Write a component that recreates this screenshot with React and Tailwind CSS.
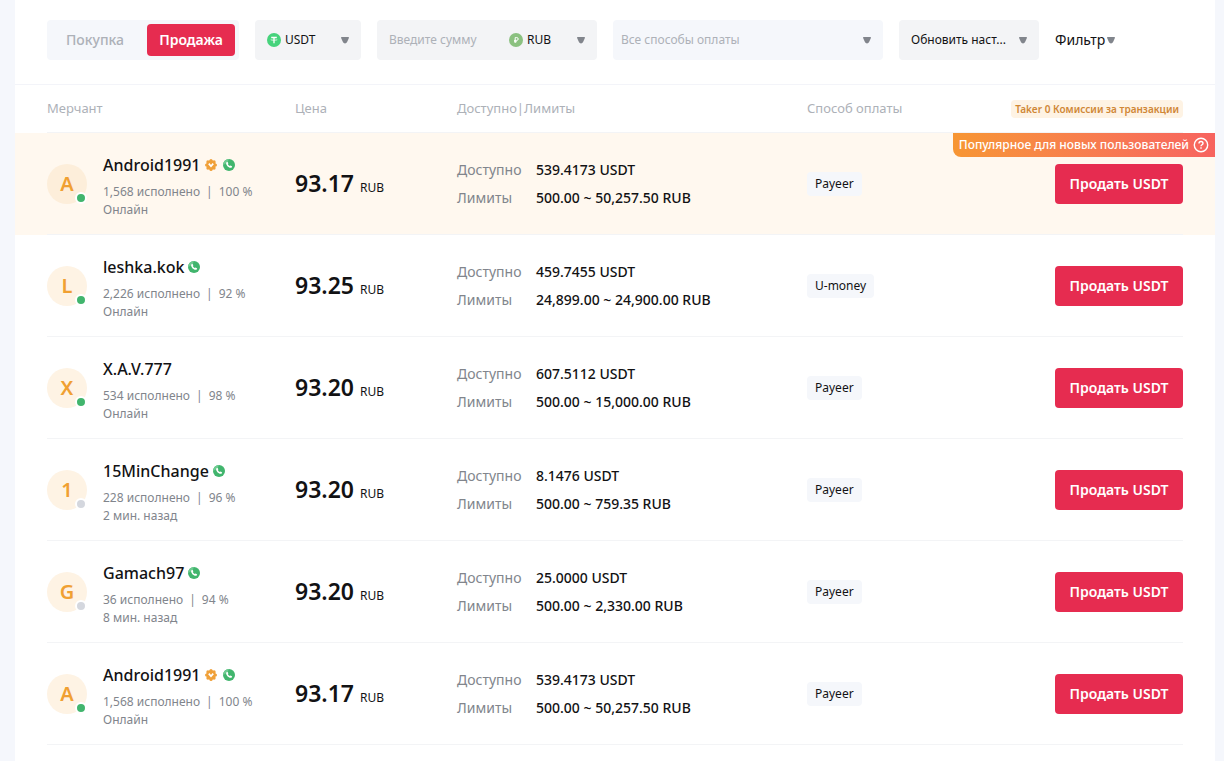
import React from "react";

const offers = [
  { id: 1, name: "Android1991", badge: true, phone: true, orders: "1,568", rate: "100", seen: "Онлайн", online: true, price: "93.17", available: "539.4173", limits: "500.00 ~ 50,257.50", payment: "Payeer", popular: true },
  { id: 2, name: "leshka.kok", phone: true, orders: "2,226", rate: "92", seen: "Онлайн", online: true, price: "93.25", available: "459.7455", limits: "24,899.00 ~ 24,900.00", payment: "U-money" },
  { id: 3, name: "X.A.V.777", orders: "534", rate: "98", seen: "Онлайн", online: true, price: "93.20", available: "607.5112", limits: "500.00 ~ 15,000.00", payment: "Payeer" },
  { id: 4, name: "15MinChange", phone: true, orders: "228", rate: "96", seen: "2 мин. назад", price: "93.20", available: "8.1476", limits: "500.00 ~ 759.35", payment: "Payeer" },
  { id: 5, name: "Gamach97", phone: true, orders: "36", rate: "94", seen: "8 мин. назад", price: "93.20", available: "25.0000", limits: "500.00 ~ 2,330.00", payment: "Payeer" },
  { id: 6, name: "Android1991", badge: true, phone: true, orders: "1,568", rate: "100", seen: "Онлайн", online: true, price: "93.17", available: "539.4173", limits: "500.00 ~ 50,257.50", payment: "Payeer" },
];

const Arrow = () => (
  <svg className="h-2 w-2 shrink-0 text-[#81858c] pointer-events-none" viewBox="0 0 8 8" fill="currentColor">
    <path d="M.8 1h6.400c.6 0 .8.500.7 1L6.200 5.700C5.600 7 4.900 7.400 4 7.400S2.400 7 1.800 5.700L.1 2C0 1.500.2 1 .8 1z" />
  </svg>
);

const UsdtIcon = () => (
  <svg className="h-3.5 w-3.5 shrink-0" viewBox="0 0 14 14">
    <circle cx="7" cy="7" r="7" fill="#46d37c" />
    <path d="M4.200 4.400h5.600M7 4.400v5.800" stroke="#fff" strokeWidth="1.3" />
    <ellipse cx="7" cy="6.700" rx="3.200" ry=".8" fill="none" stroke="#fff" strokeWidth=".5" />
  </svg>
);

const RubIcon = () => (
  <svg className="h-3.5 w-3.5 shrink-0" viewBox="0 0 14 14">
    <circle cx="7" cy="7" r="7" fill="#8bc180" />
    <path d="M6.200 10V4.600h1.600a1.400 1.400 0 010 2.800H5M5 8.700h2.800" fill="none" stroke="#fff" strokeWidth="1" />
  </svg>
);

const BadgeIcon = () => (
  <svg className="h-3 w-3 shrink-0" viewBox="0 0 12 12">
    <g fill="#f0a13a">
      <circle cx="6" cy="6" r="4.800" />
      <circle cx="6" cy="1.600" r="1.600" />
      <circle cx="9.100" cy="2.900" r="1.600" />
      <circle cx="10.400" cy="6" r="1.600" />
      <circle cx="9.100" cy="9.100" r="1.600" />
      <circle cx="6" cy="10.400" r="1.600" />
      <circle cx="2.900" cy="9.100" r="1.600" />
      <circle cx="1.600" cy="6" r="1.600" />
      <circle cx="2.900" cy="2.900" r="1.600" />
    </g>
    <path d="M3.800 4.600L6 7.200l2.200-2.600" fill="none" stroke="#fff" strokeWidth="1.700" />
  </svg>
);

const PhoneIcon = () => (
  <svg className="h-3 w-3 shrink-0" viewBox="0 0 12 12">
    <circle cx="6" cy="6" r="6" fill="#41b56d" />
    <path d="M0 6a6 6 0 016-6C5 3 3 5 0 6z" fill="#6fcb91" />
    <path
      d="M3.500 3.200l.9-.5 1 1.500-.6.8c.4.9 1.100 1.600 2 2l.9-.6 1.500 1-.5 1c-.4.5-1.200.6-2 .3C4.900 8 3.600 6.500 3.200 5c-.2-.7-.1-1.400.3-1.800z"
      fill="#fff"
    />
  </svg>
);

const HelpIcon = () => (
  <svg className="h-4 w-4 shrink-0" viewBox="0 0 16 16" fill="none" stroke="#fff" strokeWidth="1.400">
    <circle cx="8" cy="8" r="6.700" />
    <path d="M6 6.500a2 2 0 114 0c0 1.200-2 1.400-2 2.700" />
    <path d="M8 10.300v1.400" />
  </svg>
);

const Filters = () => (
  <div className="flex gap-4 border-b border-[#f3f4f9] px-8 pt-5 pb-6">
    <div className="flex h-10 w-48 shrink-0 gap-2 rounded bg-[#f5f7fb] p-1 text-sm">
      <button className="flex-1 rounded font-medium text-[#adb1b8]">Покупка</button>
      <button className="w-[88px] rounded bg-[#e62c50] font-semibold text-white">Продажа</button>
    </div>

    <div className="flex h-10 w-[106px] shrink-0 items-center rounded bg-[#f3f4f6] px-3">
      <UsdtIcon />
      <select aria-label="Криптовалюта" className="min-w-0 flex-1 appearance-none pl-1 text-xs text-[#121214] outline-none">
        <option>USDT</option>
      </select>
      <Arrow />
    </div>

    <div className="flex h-10 w-[220px] shrink-0 items-center rounded bg-[#f3f4f6] px-3">
      <input
        aria-label="Сумма"
        placeholder="Введите сумму"
        className="w-[120px] text-xs text-[#121214] outline-none placeholder:text-[#adb1b8]"
      />
      <RubIcon />
      <select aria-label="Валюта" className="min-w-0 flex-1 appearance-none pl-1 text-xs text-[#121214] outline-none">
        <option>RUB</option>
      </select>
      <Arrow />
    </div>

    <div className="flex h-10 w-[270px] items-center rounded bg-[#f5f7fb] pr-3 pl-2">
      <select aria-label="Способ оплаты" className="min-w-0 flex-1 appearance-none text-xs text-[#adb1b8] outline-none">
        <option>Все способы оплаты</option>
      </select>
      <Arrow />
    </div>

    <div className="flex h-10 w-[140px] shrink-0 items-center rounded bg-[#f3f4f6] px-3">
      <select aria-label="Обновление" className="min-w-0 flex-1 appearance-none text-xs text-[#121214] outline-none">
        <option>Обновить наст...</option>
      </select>
      <Arrow />
    </div>

    <button className="flex shrink-0 items-center gap-0.5 text-sm text-[#121214]">
      Фильтр
      <Arrow />
    </button>
  </div>
);

const OfferRow = ({ offer }) => (
  <tr className={offer.popular ? "bg-[#fff8ef]" : ""}>
    <td className="pl-8">
      <div className="flex h-[102px] items-center border-b border-[#f3f4f6]">
        <div
          className={`relative flex h-10 w-10 shrink-0 items-center justify-center rounded-full text-xl font-semibold text-[#f0a032] ${
            offer.popular ? "bg-[#fdeeda]" : "bg-[#fef3e4]"
          }`}
        >
          {offer.name[0].toUpperCase()}
          <span
            className={`absolute right-0 bottom-0 h-3 w-3 rounded-full border-2 border-white ${
              offer.online ? "bg-[#41b56d]" : "bg-[#d4d7de]"
            }`}
          />
        </div>
        <div className="ml-4 pt-1 whitespace-nowrap">
          <div className="flex h-6 items-center gap-1 text-base font-medium text-[#121214]">
            {offer.name}
            <div className="flex gap-1.5">
              {offer.badge && <BadgeIcon />}
              {offer.phone && <PhoneIcon />}
            </div>
          </div>
          <div className="mt-1.5 flex text-xs leading-[18px] text-[#81858c]">
            {offer.orders} исполнено
            <span className="mx-1.5">|</span>
            {offer.rate} %
          </div>
          <div className="text-xs leading-[18px] text-[#81858c]">{offer.seen}</div>
        </div>
      </div>
    </td>
    <td>
      <div className="flex h-[102px] items-center border-b border-[#f3f4f6] whitespace-nowrap text-[#121214]">
        <div>
          <span className="text-[23px] font-semibold">{offer.price}</span>
          <span className="ml-1.5 text-xs">RUB</span>
        </div>
      </div>
    </td>
    <td>
      <div className="flex h-[102px] flex-col justify-center gap-2 border-b border-[#f3f4f6] text-sm whitespace-nowrap">
        <div className="flex">
          <span className="w-[79px] text-[#81858c]">Доступно</span>
          <span className="font-medium text-[#121214]">{offer.available} USDT</span>
        </div>
        <div className="flex">
          <span className="w-[79px] text-[#81858c]">Лимиты</span>
          <span className="font-medium text-[#121214]">{offer.limits} RUB</span>
        </div>
      </div>
    </td>
    <td>
      <div className="flex h-[102px] items-center border-b border-[#f3f4f6]">
        <span className="flex h-6 items-center rounded bg-[#f5f7fb] px-2 text-xs text-[#121214]">{offer.payment}</span>
      </div>
    </td>
    <td className="relative pr-8">
      {offer.popular && (
        <div className="absolute top-0 right-0 flex h-6 items-center gap-1 rounded-bl-lg bg-linear-to-r from-[#f79633] to-[#f7635f] px-1.5 text-xs font-medium whitespace-nowrap text-white">
          Популярное для новых пользователей
          <HelpIcon />
        </div>
      )}
      <div className="flex h-[102px] items-center justify-end border-b border-[#f3f4f6]">
        <button className="h-10 w-32 rounded bg-[#e62c50] text-sm font-semibold whitespace-nowrap text-white">Продать USDT</button>
      </div>
    </td>
  </tr>
);

const App = () => {
  return (
    <div className="min-h-screen bg-[#f5f7fc] pr-[9px] pl-[15px] font-['Noto_Sans',sans-serif]">
      <main className="min-h-screen bg-white">
        <Filters />
        <table className="w-full table-fixed text-left">
          <thead className="text-[13px] text-[#adb1b8]">
            <tr>
              <th className="w-[280px] pl-8 font-normal">
                <div className="flex h-12 items-center border-b border-[#f3f4f6]">Мерчант</div>
              </th>
              <th className="w-[162px] font-normal">
                <div className="flex h-12 items-center border-b border-[#f3f4f6]">Цена</div>
              </th>
              <th className="w-[350px] font-normal">
                <div className="flex h-12 items-center border-b border-[#f3f4f6]">Доступно|Лимиты</div>
              </th>
              <th className="w-[150px] font-normal">
                <div className="flex h-12 items-center border-b border-[#f3f4f6]">Способ оплаты</div>
              </th>
              <th className="pr-8 font-normal">
                <div className="flex h-12 items-center justify-end border-b border-[#f3f4f6]">
                  <span className="rounded bg-[#fef3e4] px-1 text-[10px] leading-[18px] font-semibold whitespace-nowrap text-[#d08736]">
                    Taker 0 Комиссии за транзакции
                  </span>
                </div>
              </th>
            </tr>
          </thead>
          <tbody>
            {offers.map((offer) => (
              <OfferRow key={offer.id} offer={offer} />
            ))}
          </tbody>
        </table>
      </main>
    </div>
  );
};

export default App;
